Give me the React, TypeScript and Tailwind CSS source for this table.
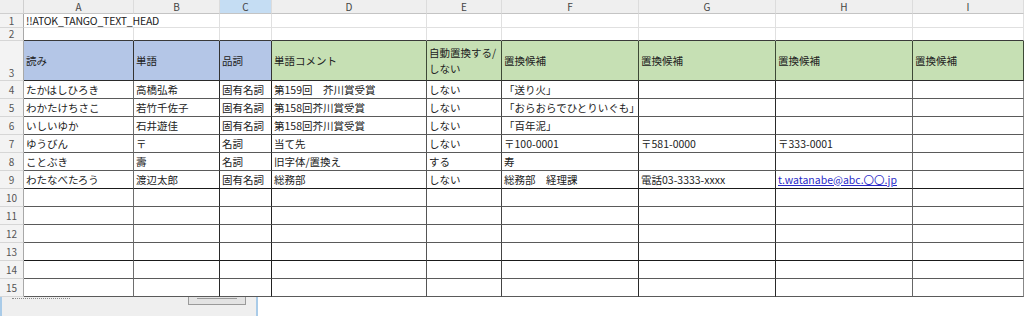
const FONT = {
  fontFamily: '"Noto Sans CJK JP", "Noto Sans", "Liberation Sans", sans-serif',
};

const letters = ["A", "B", "C", "D", "E", "F", "G", "H", "I"];

// right border colour of each column inside the bordered table
const vLine = [
  "border-r-[#6e6e6e]",
  "border-r-[#2a2a2a]",
  "border-r-[#222]",
  "border-r-[#555]",
  "border-r-[#444]",
  "border-r-[#2a2a2a]",
  "border-r-[#2a2a2a]",
  "border-r-[#666]",
  "border-r-[#888]",
];

const headers = [
  "読み",
  "単語",
  "品詞",
  "単語コメント",
  "",
  "置換候補",
  "置換候補",
  "置換候補",
  "置換候補",
];

const data: string[][] = [
  ["たかはしひろき", "高橋弘希", "固有名詞", "第159回　芥川賞受賞", "しない", "「送り火」", "", "", ""],
  ["わかたけちさこ", "若竹千佐子", "固有名詞", "第158回芥川賞受賞", "しない", "「おらおらでひとりいぐも」", "", "", ""],
  ["いしいゆか", "石井遊佳", "固有名詞", "第158回芥川賞受賞", "しない", "「百年泥」", "", "", ""],
  ["ゆうびん", "〒", "名詞", "当て先", "しない", "〒100-0001", "〒581-0000", "〒333-0001", ""],
  ["ことぶき", "壽", "名詞", "旧字体/置換え", "する", "寿", "", "", ""],
  ["わたなべたろう", "渡辺太郎", "固有名詞", "総務部", "しない", "総務部　経理課", "電話03-3333-xxxx", "t.watanabe@abc.〇〇.jp", ""],
];

const emptyRows = [10, 11, 12, 13, 14, 15];

// rows whose bottom line is drawn darker
const darkBottom = [9, 13];

function RowHead({ n, bottom }: { n: number; bottom?: boolean }) {
  return (
    <div
      className={`flex justify-center bg-[#f3f3f3] border-r border-b border-r-[#a8a8a8] border-b-[#d6d6d6] text-[10px] text-[#555] leading-none ${
        bottom ? "items-end pb-[2px]" : "items-center"
      }`}
    >
      {n}
    </div>
  );
}

function DataRow({ n, cells }: { n: number; cells: string[] }) {
  const dark = darkBottom.includes(n);
  return (
    <>
      <RowHead n={n} />
      {cells.map((c, i) => (
        <div
          key={i}
          className={`flex items-center px-[2px] border-r border-b whitespace-nowrap overflow-hidden text-[10.5px] ${vLine[i]} ${
            dark ? "border-b-[#1a1a1a]" : "border-b-[#5a5a5a]"
          } ${c.includes("@") ? "text-[#2a2ac8] underline" : "text-[#222]"}`}
        >
          {c}
        </div>
      ))}
    </>
  );
}

export default function App() {
  return (
    <div className="w-[1024px] h-[316px] bg-white overflow-hidden" style={FONT}>
      <div className="grid grid-cols-[24px_110px_86px_52px_155px_75px_137px_137px_137px_111px] grid-rows-[14px_14px_13px_40px_repeat(12,18px)]">
        {/* column letters */}
        <div className="bg-[#efefef] border-r border-b border-[#cfcfcf]" />
        {letters.map((l) => (
          <div
            key={l}
            className={`flex items-center justify-center border-r border-b border-r-[#dcdcdc] border-b-[#c4c4c4] text-[10px] text-[#444] leading-none ${
              l === "C" ? "bg-[#c5ddf3]" : "bg-[#efefef]"
            }`}
          >
            {l}
          </div>
        ))}

        {/* row 1 */}
        <RowHead n={1} />
        <div className="flex items-center px-[2px] border-b border-b-[#e0e0e0] whitespace-nowrap text-[10.5px] text-[#222] tracking-[-0.2px]">
          !!ATOK_TANGO_TEXT_HEAD
        </div>
        {letters.slice(1).map((l) => (
          <div key={l} className="border-r border-b border-[#e0e0e0]" />
        ))}

        {/* row 2 */}
        <RowHead n={2} />
        {letters.map((l) => (
          <div key={l} className="border-r border-b border-r-[#e0e0e0] border-b-[#3a3a3a]" />
        ))}

        {/* row 3 headers */}
        <RowHead n={3} bottom />
        {headers.map((h, i) => (
          <div
            key={i}
            className={`flex items-center px-[2px] border-r border-b border-b-[#2a2a2a] text-[10.5px] text-[#222] leading-[16px] ${
              i < 3 ? "bg-[#b4c6e7] border-r-[#333]" : "bg-[#c6e0b4] border-r-[#3d4a36]"
            }`}
          >
            {i === 4 ? (
              <span>
                自動置換する/
                <br />
                しない
              </span>
            ) : (
              h
            )}
          </div>
        ))}

        {data.map((r, i) => (
          <DataRow key={i} n={i + 4} cells={r} />
        ))}
        {emptyRows.map((n) => (
          <DataRow key={n} n={n} cells={["", "", "", "", "", "", "", "", ""]} />
        ))}
      </div>

      {/* window peeking out below the sheet */}
      <div className="flex h-[19px]">
        <div className="w-[258px] bg-[#efefef] border-l-2 border-r-2 border-[#a9cbe8] flex">
          <div className="ml-[10px] mt-[1px] w-[58px] h-[2px] border-t border-dotted border-[#8a8a8a]" />
          <div className="ml-auto mr-[10px] w-[58px] h-[8px] bg-[#e3e3e3] border border-t-0 border-[#9a9a9a] flex justify-center">
            <div className="mt-[1px] w-[40px] h-[1px] bg-[#9a9a9a]" />
          </div>
        </div>
        <div className="flex-1 bg-white" />
      </div>
    </div>
  );
}
